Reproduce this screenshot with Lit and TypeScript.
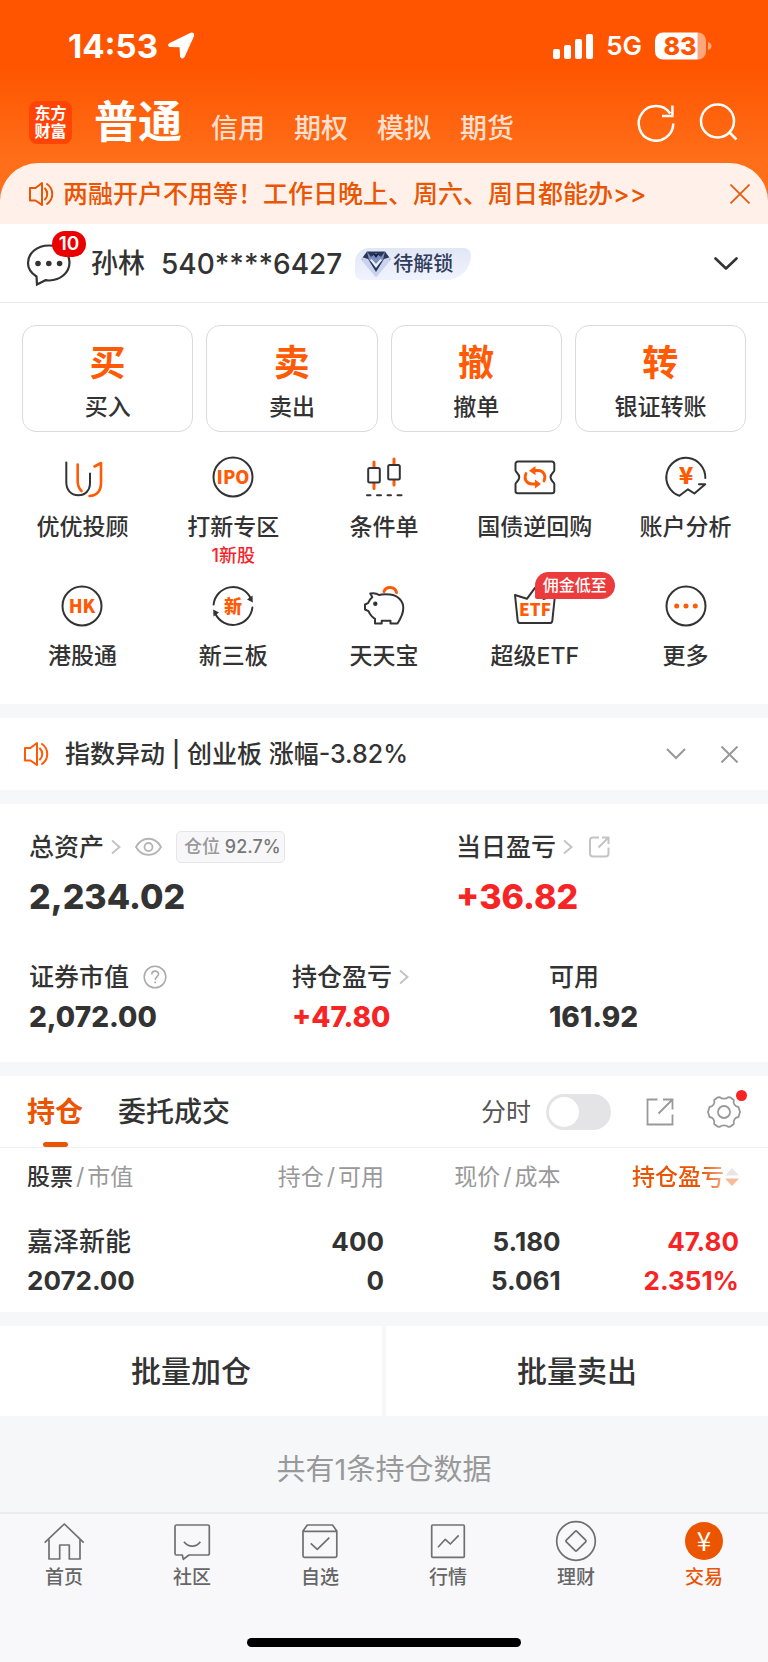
import { LitElement, html, css, svg, nothing } from "lit";
import { customElement, property, state } from "lit/decorators.js";
import { classMap } from "lit/directives/class-map.js";

const D = "#333";
const O = "#ff5a05";

const icons: Record<string, unknown> = {
  uu: svg`<g fill="none" stroke-width="2" stroke-linecap="round" stroke-linejoin="round">
    <path stroke=${D} d="M6.3 7.5V27C6.3 35 11 40.3 18.3 40.3S30 35 30 28V18.5"/>
    <path stroke=${O} stroke-width="2.6" d="M17.7 9.5V26.500C17.700 31 19 33.500 21.500 36M34.500 11.500L41 8V27.500C41 36 37.500 40.500 29.500 41"/></g>`,
  ipo: svg`<circle cx="22" cy="22" r="19.500" fill="none" stroke=${D} stroke-width="2"/><text x="22" y="28.500" class="t18">IPO</text>`,
  candle: svg`<g fill="none" stroke-linecap="round"><path stroke=${O} stroke-width="3" d="M12 7V12M12 28.500V33.500M32 4V9M32 25.500V30"/>
    <rect x="6.200" y="13" width="11.600" height="14.500" rx="1.500" stroke=${D} stroke-width="2"/>
    <rect x="26.200" y="10" width="11.600" height="14.500" rx="1.500" stroke=${D} stroke-width="2"/>
    <path stroke=${D} stroke-width="2" d="M5 40.300H8.500M15 40.300H19M25.500 40.300H29M35.500 40.300H39.500"/></g>`,
  ticket: svg`<path fill="none" stroke=${D} stroke-width="2" stroke-linejoin="round" d="M4.800 6.500H39A2.300 2.300 0 0 1 41.300 8.800V15.500C41.300 17 37.500 18.800 37.500 22.300S41.300 27.500 41.300 29V36A2.300 2.300 0 0 1 39 38.300H4.800A2.300 2.300 0 0 1 2.500 36V29C2.500 27.500 6.300 25.800 6.300 22.300S2.500 17 2.500 15.500V8.800A2.300 2.300 0 0 1 4.800 6.500Z"/>
    <g fill="none" stroke=${O} stroke-width="2.800" stroke-linecap="round"><path d="M13 18.500C10.500 24 13.500 29 19 29H22"/><path d="M31 26C33.500 20.500 30.500 15.500 25 15.500H22"/></g>
    <path fill=${O} d="M22 24.500L28 29L22 33.500ZM22.500 11L16 15.700L22.500 20.300Z"/>`,
  analysis: svg`<path fill="none" stroke=${D} stroke-width="2" stroke-linejoin="round" stroke-linecap="round" d="M41.300 23A19.500 19.500 0 1 0 15.400 40.800L24 34.300L30.400 38.500L41.200 29.200H35"/><text x="22" y="29" class="t24">¥</text>`,
  hk: svg`<circle cx="22" cy="22" r="19.500" fill="none" stroke=${D} stroke-width="2"/><text x="22" y="28.500" class="t18">HK</text>`,
  xin: svg`<path fill="none" stroke=${D} stroke-width="2" stroke-linecap="round" d="M2.600 20.500A19.500 19.500 0 0 1 39.500 14M41.400 23.500A19.500 19.500 0 0 1 4.500 30"/>
    <path fill=${D} d="M41.500 11.500L41.800 18.500L36 15.500ZM2.500 32.500L2.200 25.500L8 28.500Z"/><text x="22" y="28.800" class="t18">新</text>`,
  pig: svg`<path fill="none" stroke=${O} stroke-width="3" stroke-linecap="round" d="M22 7.500C24 2 33 2 34.500 8.500"/>
    <path fill="none" stroke=${D} stroke-width="2" stroke-linejoin="round" d="M8.300 9.500C11 9 15 9.500 17 11C20 10.200 24 10.200 28 10.600C36 11.500 41.300 17 41.300 24C41.300 30 39 34 35.500 39.500H28.500V36.800H19.700V39.500H13V34.800C9.500 33 8 30.500 6.500 27.200L3 25.500V20.500L6 19.200C7 16.500 8.500 14.500 10.300 13.200Z"/><circle cx="13.300" cy="19.800" r="2.200" fill=${D}/>`,
  etf: svg`<path fill="none" stroke=${D} stroke-width="2" stroke-linejoin="round" d="M2 11L13.900 14.800L22 3.800L30.500 15L42 11L39.300 36.800A2.500 2.500 0 0 1 36.800 39H7.200A2.500 2.500 0 0 1 4.700 36.800Z"/><text x="22" y="32.300" class="t17">ETF</text>`,
  more: svg`<circle cx="22" cy="22" r="19.500" fill="none" stroke=${D} stroke-width="2"/><g fill=${O}><circle cx="12.700" cy="22" r="2.500"/><circle cx="22" cy="22" r="2.500"/><circle cx="31.300" cy="22" r="2.500"/></g>`,
  home: svg`<path d="M2.700 23.700L22.300 5L41.700 23.700M7 20.500V40H17.700V26H27.300V40H38V20.500"/>`,
  community: svg`<path d="M6.500 6H37.800A1.500 1.500 0 0 1 39.300 7.500V34.500A1.500 1.500 0 0 1 37.800 36H19L13.300 40.300L12.300 36H6.500A1.500 1.500 0 0 1 5 34.500V7.500A1.500 1.500 0 0 1 6.500 6ZM14 22.700C18 28.500 26.500 28.500 30.300 22.700"/>`,
  watch: svg`<path d="M5 12L9.300 6H34.500L38.800 12V36.800A1.500 1.500 0 0 1 37.300 38.300H6.500A1.500 1.500 0 0 1 5 36.800ZM5 12.300H38.800M12.700 24.300L19.300 30.300L31.300 18.700"/>`,
  market: svg`<rect x="5.700" y="6" width="32.600" height="32.300" rx="1"/><path d="M12 28.300L19.300 20.300L24.300 25L32.700 16.300"/>`,
  wealth: svg`<circle cx="22" cy="22" r="19.300"/><path d="M21.200 12.300Q22 11.500 22.800 12.300L31.700 21.200Q32.500 22 31.700 22.800L22.800 31.700Q22 32.500 21.200 31.700L12.300 22.800Q11.500 22 12.300 21.200Z"/>`,
  trade: svg`<circle cx="22" cy="22" r="19" class="disc"/><text x="22" y="31.500" class="yen">¥</text>`,
};

const speaker = html`<svg class="speaker" viewBox="0 0 26 26" width="26" height="26" aria-hidden="true">
  <path d="M2 7H7.500L14 2V24L7.500 19.500H2ZM17 7.500C20 10.500 20 15.500 17 18.500M19 3C26 8 26 18 19 23"/></svg>`;
const chevron = html`<svg class="chev" viewBox="0 0 10 16" width="10" height="16" aria-hidden="true"><path d="M1 1.500L8.500 8L1 14.500"/></svg>`;

@customElement("shortcut-item")
class ShortcutItem extends LitElement {
  @property() icon = "";
  @property() label = "";
  @property() note = "";
  @property() badge = "";

  static styles = css`
    button {
      display: flex; flex-direction: column; align-items: center; width: 100%;
      padding: 0; border: 0; background: none; color: #333; font: inherit; cursor: pointer;
    }
    .pic { position: relative; width: 44px; height: 44px; margin-bottom: 14px; }
    svg { display: block; }
    .label { font-size: 23px; line-height: 28px; font-weight: 500; white-space: nowrap; }
    .note { margin-top: 4px; font-size: 18px; line-height: 22px; color: #f5252a; font-weight: 500; }
    .badge {
      position: absolute; left: 22px; top: -12px; padding: 0 8px; border-radius: 14px 14px 14px 2px;
      background: #ec3b3d; color: #fff; font-size: 16px; line-height: 27px; font-weight: 500; white-space: nowrap;
    }
    text { fill: #ff5a05; text-anchor: middle; font-weight: 900; font-family: "Noto Sans CJK SC", sans-serif; }
    .t17 { font-size: 17px; }
    .t18 { font-size: 18px; }
    .t24 { font-size: 24px; }
  `;

  render() {
    return html`<button type="button">
      <span class="pic">
        <svg viewBox="0 0 44 44" width="44" height="44" aria-hidden="true">${icons[this.icon]}</svg>
        ${this.badge ? html`<span class="badge">${this.badge}</span>` : nothing}
      </span>
      <span class="label">${this.label}</span>
      ${this.note ? html`<span class="note">${this.note}</span>` : nothing}
    </button>`;
  }
}

@customElement("app-root")
class AppRoot extends LitElement {
  @state() private intraday = false;

  static styles = css`
    :host {
      display: block; background: #f6f7f9; color: #333;
      font-family: Inter, "Noto Sans CJK SC", sans-serif; font-size: 25px; line-height: 32px;
    }
    * { box-sizing: border-box; }
    button { padding: 0; border: 0; background: none; color: inherit; font: inherit; cursor: pointer; }
    a { color: inherit; text-decoration: none; }
    svg { display: block; flex: none; fill: none; }
    h1, h2, p, dl, dd { margin: 0; font: inherit; }
    section, .account { background: #fff; }

    .top { background: linear-gradient(#ff5500 0, #ff5500 68px, #ff6f1a 163px); }
    .status { display: flex; align-items: center; justify-content: space-between; height: 92px; padding: 0 56px 0 68px; color: #fff; }
    .status div { display: flex; align-items: center; }
    .time { font-size: 33px; font-weight: 700; margin-right: 9px; }
    .net { font-size: 26px; font-weight: 600; margin: 0 13px; }
    .level { fill: #ff5500; font-size: 25px; font-weight: 800; text-anchor: middle; }

    .bar { display: flex; align-items: center; height: 71px; padding: 0 29px 11px 29px; color: #fff; }
    .logo { display: grid; place-content: center; width: 43px; height: 43px; margin-right: 22px; border-radius: 8px; background: #ff4406; font-size: 16px; line-height: 18px; font-weight: 700; }
    .modes { display: flex; align-items: baseline; gap: 29px; flex: 1; color: #ffdfcd; font-size: 27px; font-weight: 500; }
    .modes .on { color: #fff; font-size: 44px; line-height: 58px; font-weight: 600; }
    .tools { display: flex; gap: 17px; }

    .banner { display: flex; align-items: center; height: 61px; padding: 0 18px 0 28px; border-radius: 38px 38px 0 0; background: #fff1ea; color: #ea5504; }
    .banner a { flex: 1; margin-left: 9px; font-size: 25px; font-weight: 500; }
    .speaker path { stroke: currentColor; stroke-width: 2; stroke-linejoin: round; stroke-linecap: round; }

    .account { display: flex; align-items: center; height: 79px; padding: 1px 30px 0 26px; border-bottom: 1px solid #ececee; }
    .msg { position: relative; margin-right: 20px; }
    .count { position: absolute; left: 26px; top: -11px; width: 34px; border-radius: 13px; background: #eb0000; color: #fff; font-size: 19px; line-height: 26px; font-weight: 600; }
    .name { margin-right: 16px; font-size: 27px; font-weight: 500; }
    .number { margin-right: 13px; font-size: 28px; font-weight: 500; }
    .chip { display: flex; align-items: center; height: 32px; padding: 0 18px 0 6px; gap: 2px; border-radius: 16px 8px 28px 8px; background: linear-gradient(#e2e7f5, #f0f3ff); color: #303c5c; font-size: 20px; font-weight: 500; }
    .expand { margin-left: auto; }

    .quick { padding: 22px 22px 0; display: grid; grid-template-columns: repeat(4, 1fr); gap: 13px; }
    .quick button { display: flex; flex-direction: column; align-items: center; padding: 15px 0 9px; border: 1px solid #dadadc; border-radius: 14px; }
    .quick .big { color: #ff5a05; font-size: 36px; line-height: 44px; font-weight: 700; margin-bottom: 7px; }
    .quick .small { font-size: 23px; line-height: 30px; font-weight: 500; }
    .shortcuts { display: grid; grid-template-columns: repeat(5, 1fr); row-gap: 17px; padding: 23px 7px 34px; }

    .notice { display: flex; align-items: center; height: 72px; margin: 14px 0; padding: 0 30px 0 23px; }
    .notice .speaker { color: #ff5a05; }
    .notice a { flex: 1; margin-left: 16px; font-weight: 500; }
    .notice .tools { gap: 35px; align-items: center; }

    .assets { padding: 27px 29px 27px; margin-bottom: 14px; }
    .assets dl { display: grid; }
    .main { grid-template-columns: 427fr 283fr; margin-bottom: 42px; }
    .sub { grid-template-columns: 263fr 257fr 190fr; }
    dt { display: flex; align-items: center; height: 32px; font-weight: 500; }
    .assets dt button { display: flex; align-items: center; }
    .link { gap: 7px; }
    .chev path { stroke: #c4c4c6; stroke-width: 2; }
    .main .link { margin-right: 14px; }
    .ratio { height: 32px; margin-left: 14px; padding: 0 3px 0 7px; border: 1px solid #e6e6e9; border-radius: 5px; background: #f7f7f9; color: #999; font-size: 18px; line-height: 30px; }
    .ratio b { color: #777; font-weight: 500; }
    .help { margin-left: 14px; }
    .main dd { margin-top: 12px; font-size: 34px; line-height: 44px; font-weight: 800; }
    .sub dd { margin-top: 6px; font-size: 28px; line-height: 36px; font-weight: 800; }
    .up, .assets dd.up { color: #f62424; }

    .tabs { display: flex; align-items: center; height: 72px; padding: 0 27px; border-bottom: 1px solid #f0f0f2; }
    .tabs .tab { position: relative; height: 71px; margin-right: 35px; font-size: 28px; font-weight: 500; }
    .tabs .on { color: #ea5504; font-weight: 700; }
    .tabs .on::after { content: ""; position: absolute; left: 16px; bottom: 0; width: 25px; height: 5px; border-radius: 3px; background: #ea5504; }
    .switch { display: flex; align-items: center; gap: 15px; margin: 0 35px 0 auto; color: #555; font-size: 25px; }
    .switch input { appearance: none; display: grid; align-items: center; width: 65px; height: 36px; margin: 0; padding: 0 3px; border-radius: 18px; background: #e4e4e6; cursor: pointer; }
    .switch input::before { content: ""; width: 30px; height: 30px; border-radius: 50%; background: #fff; }
    .switch input:checked { background: #ea5504; justify-items: end; }
    .gear { position: relative; margin-left: 33px; }
    .dot { position: absolute; right: -6px; top: -5px; width: 11px; height: 11px; border-radius: 50%; background: #f62424; }

    table { width: 100%; table-layout: fixed; border-collapse: collapse; }
    th, td { padding: 0; text-align: right; font-weight: 700; }
    th:first-child, td:first-child { padding-left: 27px; text-align: left; }
    th:last-child, td:last-child { padding-right: 29px; }
    thead th { height: 58px; color: #999; font-size: 23px; font-weight: 400; }
    thead b { color: #333; font-weight: 500; }
    th i { margin: 0 3px; font-style: normal; }
    td { font-size: 26px; line-height: 39px; }
    tbody td { padding-top: 16px; padding-bottom: 12px; }
    .stock { font-weight: 500; }
    .sort { display: inline-flex; align-items: center; gap: 1px; color: #ea5504; font-weight: 500; -webkit-mask-image: linear-gradient(90deg, #000 66%, rgba(0, 0, 0, .4) 88%); mask-image: linear-gradient(90deg, #000 66%, rgba(0, 0, 0, .4) 88%); }
    .c1 { width: 27%; } .c2 { width: 23%; } .c3 { width: 23%; } .c4 { width: 27%; }

    .batch { display: grid; grid-template-columns: 1fr 1fr; gap: 4px; margin-top: 14px; }
    .batch button { height: 90px; background: #fff; font-size: 30px; font-weight: 500; }
    .total { padding: 38px 0 26px; text-align: center; color: #999; font-size: 29px; }

    nav.bottom { display: grid; grid-template-columns: repeat(6, 1fr); padding-top: 5px; border-top: 2px solid #ececee; background: #f8f8fb; color: #666; }
    nav.bottom a { display: flex; flex-direction: column; align-items: center; gap: 4px; font-size: 19px; line-height: 22px; font-weight: 500; }
    nav.bottom svg { stroke: #707072; stroke-width: 1.7; stroke-linejoin: round; }
    nav.bottom .on { color: #ea5504; }
    .disc { fill: #ec5500; stroke: none; }
    .yen { fill: #fff; stroke: none; font-family: "Noto Sans CJK SC", sans-serif; font-size: 26px; font-weight: 400; text-anchor: middle; }
    .indicator { display: flex; justify-content: center; padding: 49px 0 15px; background: #f8f8fb; }
    .indicator span { width: 274px; height: 9px; border-radius: 5px; background: #000; }
  `;

  private shortcuts = [
    { icon: "uu", label: "优优投顾" },
    { icon: "ipo", label: "打新专区", note: "1新股" },
    { icon: "candle", label: "条件单" },
    { icon: "ticket", label: "国债逆回购" },
    { icon: "analysis", label: "账户分析" },
    { icon: "hk", label: "港股通" },
    { icon: "xin", label: "新三板" },
    { icon: "pig", label: "天天宝" },
    { icon: "etf", label: "超级ETF", badge: "佣金低至" },
    { icon: "more", label: "更多" },
  ];
  private quick = [["买", "买入"], ["卖", "卖出"], ["撤", "撤单"], ["转", "银证转账"]];
  private pages = [
    ["home", "首页"], ["community", "社区"], ["watch", "自选"],
    ["market", "行情"], ["wealth", "理财"], ["trade", "交易"],
  ];

  private renderTop() {
    return html`<header class="top">
      <div class="status">
        <div>
          <span class="time">14:53</span>
          <svg viewBox="0 0 28 28" width="28" height="28"><path fill="#fff" stroke="#fff" stroke-width="1.500" stroke-linejoin="round" d="M2.500 12L24 1.500Q27 .8 26.300 4L17 24.500Q15 27 13.800 24.500L13.300 14.500L3 14.200Q.8 13.500 2.500 12Z"/></svg>
        </div>
        <div>
          <svg viewBox="0 0 40 26" width="40" height="26"><g fill="#fff"><rect x="0" y="16" width="7" height="10" rx="2"/><rect x="11" y="12" width="7" height="14" rx="2"/><rect x="22" y="6" width="7" height="20" rx="2"/><rect x="33" y="1" width="7" height="25" rx="2"/></g></svg>
          <span class="net">5G</span>
          <svg viewBox="0 0 57 28" width="57" height="28">
            <path fill="#ffa67c" d="M42 .5H43A8 8 0 0 1 51 8.500V19.500A8 8 0 0 1 43 27.500H42ZM53 10Q56.500 11 56.500 14T53 18Z"/>
            <path fill="#fff" d="M8 .5H42.500V27.500H8A8 8 0 0 1 0 19.500V8.500A8 8 0 0 1 8 .5Z"/>
            <text class="level" x="25" y="23">83</text>
          </svg>
        </div>
      </div>
      <div class="bar">
        <h1 class="logo"><span>东方</span><span>财富</span></h1>
        <div class="modes">
          <button class="on" type="button">普通</button>
          <button type="button">信用</button><button type="button">期权</button>
          <button type="button">模拟</button><button type="button">期货</button>
        </div>
        <div class="tools">
          <button type="button" aria-label="刷新"><svg viewBox="0 0 44 44" width="44" height="44"><path stroke="#fff" stroke-width="2.500" d="M39.300 23.500A17.300 17.300 0 1 1 36.200 13.500M38.400 5.500V16H28"/></svg></button>
          <button type="button" aria-label="搜索"><svg viewBox="0 0 44 44" width="44" height="44"><path stroke="#fff" stroke-width="2.500" d="M39 21A16.500 16.500 0 1 0 6 21A16.500 16.500 0 1 0 39 21M34 32L41.500 39.500"/></svg></button>
        </div>
      </div>
      <div class="banner">
        ${speaker}<a href="#margin">两融开户不用等！工作日晚上、周六、周日都能办&gt;&gt;</a>
        <button type="button" aria-label="关闭"><svg viewBox="0 0 20 20" width="20" height="20"><path stroke="#ea5504" stroke-width="1.600" d="M.5 .5L19.500 19.500M19.500 .5L.5 19.500"/></svg></button>
      </div>
    </header>`;
  }

  private renderAccount() {
    return html`<div class="account">
      <button class="msg" type="button" aria-label="消息">
        <svg viewBox="0 0 45 44" width="45" height="44"><path stroke="#333" stroke-width="2.200" d="M10.500 34.500C5 31 2 26.500 2 21C2 11 11 3.500 23 3.500S43.500 11 43.500 20.500S35 38.500 23 38.500Q21 38.500 19.500 38.200L11 42.500Z"/><g fill="#333"><circle cx="12" cy="21.500" r="2.800"/><circle cx="22.800" cy="21.500" r="2.800"/><circle cx="33.600" cy="21.500" r="2.800"/></g></svg>
        <span class="count">10</span>
      </button>
      <span class="name">孙林</span><span class="number">540****6427</span>
      <span class="chip">
        <svg viewBox="0 0 30 28" width="30" height="28"><path fill="#28365a" d="M6 1.500H24L29.500 9L15 26L.5 9Z"/><path fill="#c9d3ee" d="M.5 7L7 9L15 22L23 9L29.500 7L28 12L15 27.500L2 12Z"/><path fill="#7f8fbd" d="M6 1.500L10 7L15 3L20 7L24 1.500L22 10L15 15L8 10Z"/><path fill="#eef2ff" d="M9 10L15 18L21 10L19.500 9L15 14L10.500 9Z"/><path fill="#1b2646" d="M12 4H18L15 8Z"/></svg>
        待解锁
      </span>
      <button class="expand" type="button" aria-label="展开账户"><svg viewBox="0 0 24 14" width="24" height="14"><path stroke="#333" stroke-width="2.600" stroke-linecap="round" stroke-linejoin="round" d="M1.500 1.500L12 11.500L22.500 1.500"/></svg></button>
    </div>`;
  }

  private renderAssets() {
    return html`<section class="assets">
      <dl class="main">
        <div><dt><button class="link" type="button">总资产${chevron}</button>
          <button type="button" aria-label="隐藏金额"><svg viewBox="0 0 27 20" width="27" height="20"><path stroke="#b4b4b6" stroke-width="1.800" d="M1 10C7 -1 20 -1 26 10C20 20.500 7 20.500 1 10Z"/><circle cx="13.500" cy="10" r="4" stroke="#b4b4b6" stroke-width="1.800"/></svg></button>
          <span class="ratio">仓位 <b>92.7%</b></span></dt><dd>2,234.02</dd></div>
        <div><dt><button class="link" type="button">当日盈亏${chevron}</button>
          <button type="button" aria-label="分享"><svg viewBox="0 0 24 24" width="24" height="24"><path stroke="#c4c4c6" stroke-width="2" d="M12 2.500H6Q3 2.500 3 5.500V18.500Q3 21.500 6 21.500H18.500Q21.500 21.500 21.500 18.500V12.500M15 2.500H21.500V9M21.500 2.500L11.500 12.500"/></svg></button></dt><dd class="up">+36.82</dd></div>
      </dl>
      <dl class="sub">
        <div><dt>证券市值<button class="help" type="button" aria-label="说明"><svg viewBox="0 0 24 24" width="24" height="24"><circle cx="12" cy="12" r="10.800" stroke="#aaa" stroke-width="1.500"/><path stroke="#aaa" stroke-width="1.600" d="M8.800 9.500C8.800 5 15.500 5 15.500 9.200C15.500 11.500 12.200 12 12.200 15M12.200 16.500V18.300"/></svg></button></dt><dd>2,072.00</dd></div>
        <div><dt><button class="link" type="button">持仓盈亏${chevron}</button></dt><dd class="up">+47.80</dd></div>
        <div><dt>可用</dt><dd>161.92</dd></div>
      </dl>
    </section>`;
  }

  private renderHoldings() {
    return html`<section>
      <div class="tabs">
        <button class="tab on" type="button">持仓</button><button class="tab" type="button">委托成交</button>
        <label class="switch">分时<input type="checkbox" role="switch" .checked=${this.intraday}
          @change=${(e: Event) => (this.intraday = (e.target as HTMLInputElement).checked)} /></label>
        <button type="button" aria-label="分享持仓"><svg viewBox="0 0 28 28" width="28" height="28"><path stroke="#999" stroke-width="1.800" d="M11.500 1.500H1.500V26.500H26.500V16.500M17 1.500H26.500V11.500M26.500 1.500L12.500 15.500"/></svg></button>
        <button class="gear" type="button" aria-label="设置"><svg viewBox="0 0 34 34" width="34" height="34"><path stroke="#999" stroke-width="1.800" stroke-linejoin="round" d="M10.500 2.500L13 2.200C14.500 4.200 19.500 4.200 21 2.200L23.500 2.500L26.800 5C26 9 28 11.500 31.500 12L33 17L31.500 22C28 22.500 26 25 26.800 29L23.500 31.500L21 31.800C19.500 29.800 14.500 29.800 13 31.800L10.500 31.500L7.200 29C8 25 6 22.500 2.500 22L1 17L2.500 12C6 11.500 8 9 7.200 5Z"/><circle cx="17" cy="17" r="6" stroke="#999" stroke-width="1.800"/></svg><span class="dot"></span></button>
      </div>
      <table>
        <colgroup><col class="c1" /><col class="c2" /><col class="c3" /><col class="c4" /></colgroup>
        <thead><tr>
          <th scope="col"><b>股票</b><i>/</i>市值</th><th scope="col">持仓<i>/</i>可用</th><th scope="col">现价<i>/</i>成本</th>
          <th scope="col"><button class="sort" type="button">持仓盈亏<svg viewBox="0 0 14 20" width="14" height="20"><path fill="#c4c4c6" d="M0 8.500L7 1L14 8.500Z"/><path fill="#ea5504" d="M0 11.500L7 19L14 11.500Z"/></svg></button></th>
        </tr></thead>
        <tbody><tr>
          <td><span class="stock">嘉泽新能</span><br />2072.00</td><td>400<br />0</td><td>5.180<br />5.061</td><td class="up">47.80<br />2.351%</td>
        </tr></tbody>
      </table>
    </section>`;
  }

  render() {
    return html`
      ${this.renderTop()}
      <main>
        ${this.renderAccount()}
        <section>
          <div class="quick">${this.quick.map(([big, small]) => html`<button type="button"><span class="big">${big}</span><span class="small">${small}</span></button>`)}</div>
          <div class="shortcuts">${this.shortcuts.map((s) => html`<shortcut-item .icon=${s.icon} .label=${s.label} .note=${s.note ?? ""} .badge=${s.badge ?? ""}></shortcut-item>`)}</div>
        </section>
        <section class="notice">
          ${speaker}<a href="#index">指数异动 | 创业板 涨幅-3.82%</a>
          <div class="tools">
            <button type="button" aria-label="展开"><svg viewBox="0 0 20 12" width="20" height="12"><path stroke="#999" stroke-width="2" d="M1 1L10 10L19 1"/></svg></button>
            <button type="button" aria-label="关闭"><svg viewBox="0 0 17 17" width="17" height="17"><path stroke="#999" stroke-width="2" d="M.5 .5L16.500 16.500M16.500 .5L.5 16.500"/></svg></button>
          </div>
        </section>
        ${this.renderAssets()}
        ${this.renderHoldings()}
        <div class="batch"><button type="button">批量加仓</button><button type="button">批量卖出</button></div>
        <p class="total">共有1条持仓数据</p>
      </main>
      <nav class="bottom">${this.pages.map(([icon, label]) => html`<a href="#${icon}" class=${classMap({ on: icon === "trade" })}><svg viewBox="0 0 44 44" width="44" height="44" aria-hidden="true">${icons[icon]}</svg>${label}</a>`)}</nav>
      <div class="indicator"><span></span></div>
    `;
  }
}
